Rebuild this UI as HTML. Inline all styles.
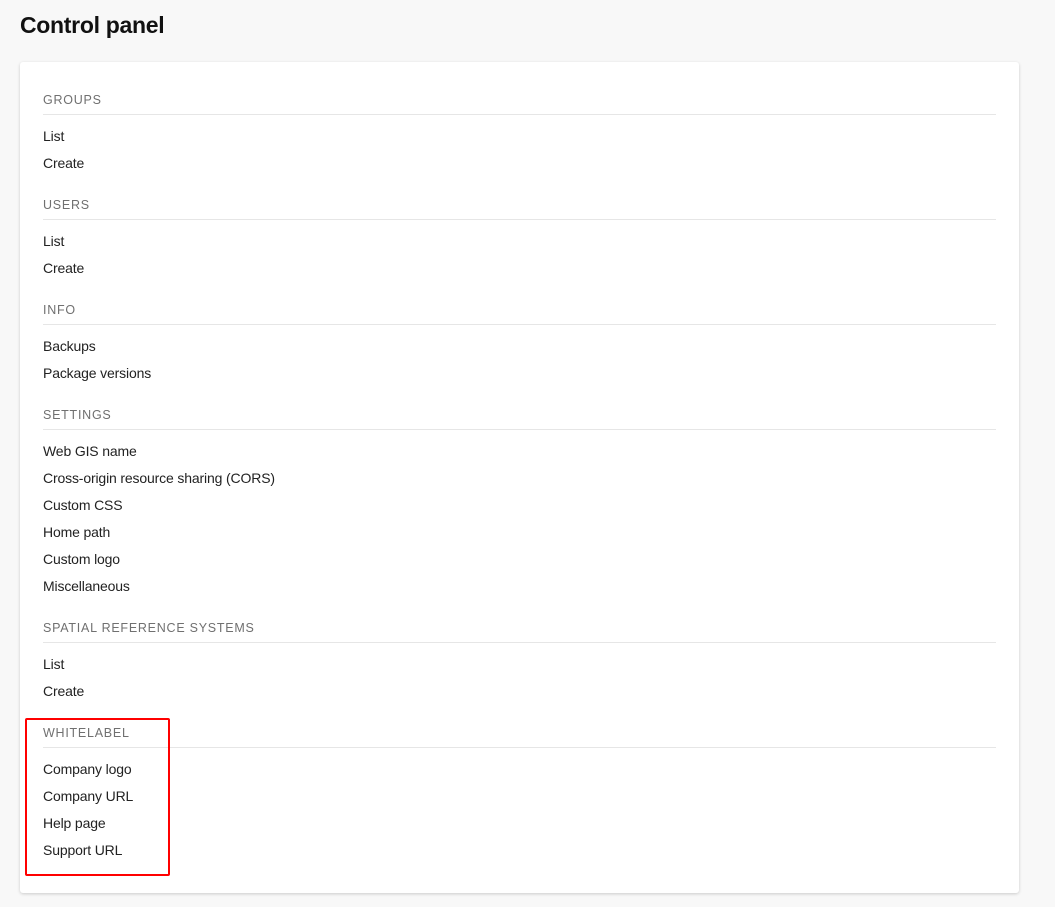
<!DOCTYPE html>
<html><head><style>
body{margin:0;background:#f8f8f8;font-family:"Liberation Sans",sans-serif;width:1055px;height:907px;position:relative;overflow:hidden}
h1{position:absolute;left:20px;top:9px;margin:0;font-size:23px;font-weight:bold;color:#111;line-height:32px;letter-spacing:-0.3px}
.card{position:absolute;left:20px;top:62px;width:999px;height:831px;background:#fff;border-radius:3px;box-shadow:0 1px 3px rgba(0,0,0,0.18);box-sizing:border-box;padding:28px 23px 0 23px}
.h{font-size:12.5px;letter-spacing:0.75px;color:#707070;line-height:20px;height:24px;padding-top:0;padding-bottom:0;border-bottom:1px solid #e6e6e6}
.items{margin-top:8px;margin-bottom:18px}
.items div{font-size:14px;letter-spacing:-0.15px;line-height:27px;height:27px;color:#222}
.red{position:absolute;left:25px;top:718px;width:141px;height:154px;border:2px solid #f00;border-radius:2px}
</style></head><body>
<h1>Control panel</h1>
<div class="card">
<div class="h">GROUPS</div><div class="items"><div>List</div><div>Create</div></div>
<div class="h">USERS</div><div class="items"><div>List</div><div>Create</div></div>
<div class="h">INFO</div><div class="items"><div>Backups</div><div>Package versions</div></div>
<div class="h">SETTINGS</div><div class="items"><div>Web GIS name</div><div>Cross-origin resource sharing (CORS)</div><div>Custom CSS</div><div>Home path</div><div>Custom logo</div><div>Miscellaneous</div></div>
<div class="h">SPATIAL REFERENCE SYSTEMS</div><div class="items"><div>List</div><div>Create</div></div>
<div class="h">WHITELABEL</div><div class="items"><div>Company logo</div><div>Company URL</div><div>Help page</div><div>Support URL</div></div>
</div>
<div class="red"></div>
</body></html>
